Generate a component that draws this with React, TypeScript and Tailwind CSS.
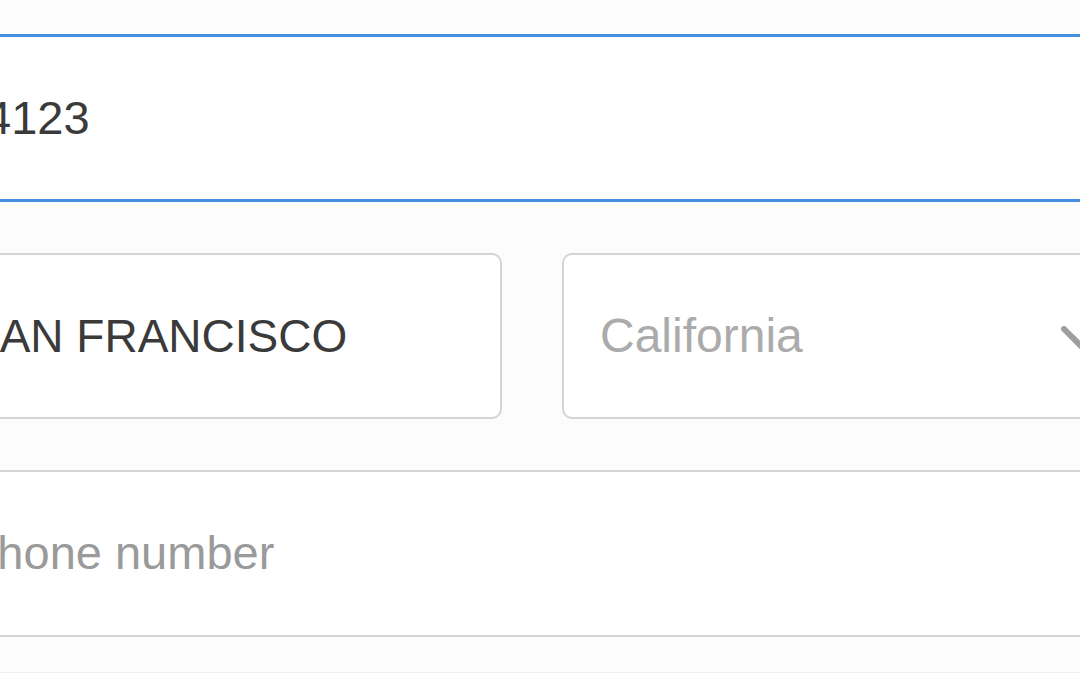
export default function App() {
  return (
    <div className="w-[1080px] h-[673px] overflow-hidden bg-[#fcfcfc] font-['Liberation_Sans',Arial,sans-serif]">
      <div className="-ml-[71px] w-[1260px] pt-[34px]">
        {/* address line, focused */}
        <div className="h-[168px] border-y-[3px] border-[#4390e2] bg-white flex items-center pl-[56px] text-[47px] text-[#3a3a3a]">
          4123
        </div>

        <div className="mt-[51px] flex gap-[60px]">
          <div className="w-[573px] h-[166px] rounded-[10px] border-2 border-[#d4d4d4] bg-white flex items-center pl-[38px] text-[46px] text-[#3a3a3a]">
            SAN FRANCISCO
          </div>
          <div className="w-[573px] h-[166px] rounded-[10px] border-2 border-[#d4d4d4] bg-white flex items-center pl-[36px] pr-[28px] text-[48px] text-[#ababab]">
            <span>California</span>
            <svg className="ml-auto mt-[6px]" width="44" height="26" viewBox="0 0 44 26" fill="none">
              <polyline points="3,3 22,22 41,3" stroke="#9e9e9e" strokeWidth="6" strokeLinecap="round" strokeLinejoin="round" />
            </svg>
          </div>
        </div>

        <div className="mt-[51px] h-[167px] border-y-2 border-[#d4d4d4] bg-white flex items-center pl-[37px] text-[47px] text-[#9a9a9a]">
          Phone number
        </div>

        <div className="mt-[35px] border-t border-[#efefef]" />
      </div>
    </div>
  );
}
